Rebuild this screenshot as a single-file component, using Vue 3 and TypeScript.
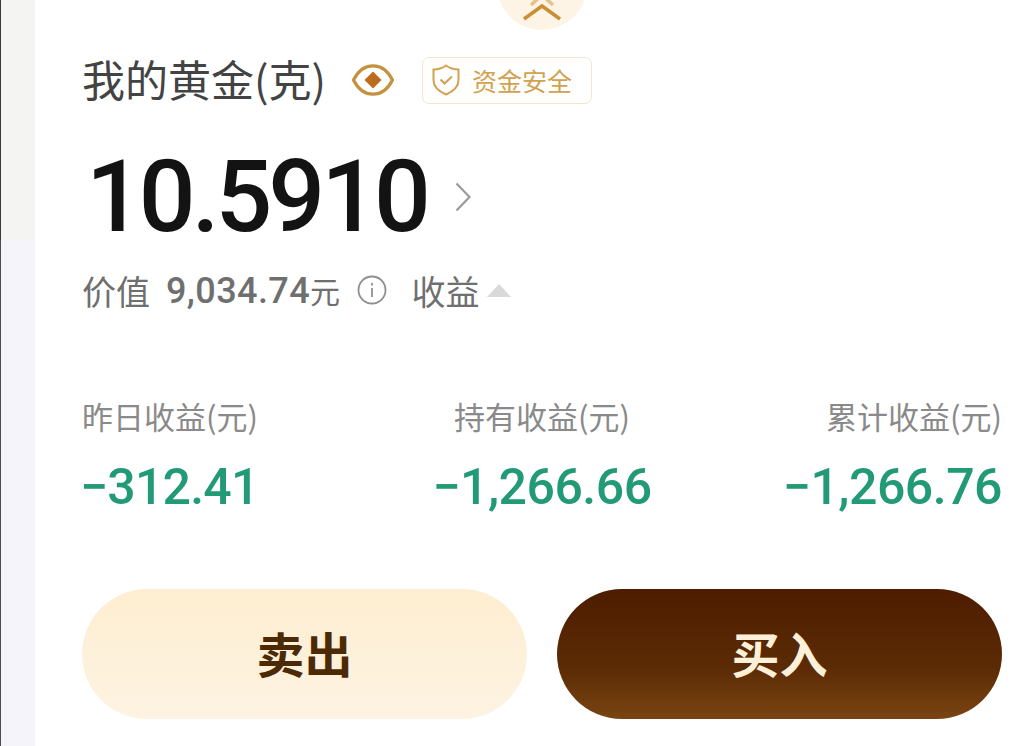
<script setup lang="ts">
interface Stat {
  label: string
  value: string
}

const stats: Stat[] = [
  { label: '昨日收益(元)', value: '−312.41' },
  { label: '持有收益(元)', value: '−1,266.66' },
  { label: '累计收益(元)', value: '−1,266.76' }
]
</script>

<template>
  <div class="page">
    <!-- Neighbouring card edge -->
    <div class="side">
      <div class="side-top"></div>
      <div class="side-bottom"></div>
    </div>

    <main class="panel">
      <div class="handle-row">
        <div class="handle">
          <svg class="handle-icon" viewBox="0 0 40 24" fill="none" stroke="#c98f35" stroke-width="3.500">
            <polyline points="9,7 20,-3 31,7" opacity="0.5" />
            <polyline points="2,21 20,8 38,21" />
          </svg>
        </div>
      </div>

      <!-- Header -->
      <div class="title-row">
        <h1 class="title">我的黄金(克)</h1>
        <svg class="eye" viewBox="0 0 42 32" fill="none">
          <path d="M1.500 16 C6 7 13 1.800 21 1.800 C29 1.800 36 7 40.500 16 C36 25 29 30.200 21 30.200 C13 30.200 6 25 1.500 16 Z" stroke="#c4913f" stroke-width="3.200" />
          <path d="M21 7.500 L29.500 16 L21 24.500 L12.500 16 Z" fill="#bd6c1c" />
        </svg>
        <div class="safe-tag">
          <svg class="shield" viewBox="0 0 28 32" fill="none" stroke="#d2a24f" stroke-width="2">
            <path d="M14 1.500 C18 4.500 22 5.500 26.500 5.500 V16 C26.500 23 21 27.500 14 30.500 C7 27.500 1.500 23 1.500 16 V5.500 C6 5.500 10 4.500 14 1.500 Z" />
            <polyline points="8.500,15.500 12.500,19.500 20,12.500" />
          </svg>
          <span>资金安全</span>
        </div>
      </div>

      <!-- Amount -->
      <div class="amount-row">
        <span class="amount">10.5910</span>
        <svg class="chevron" viewBox="0 0 16 30" fill="none" stroke="#9a9a9a" stroke-width="2.200">
          <polyline points="1.500,1.500 14.500,15 1.500,28.500" />
        </svg>
      </div>

      <div class="value-row">
        <span class="value-label">价值</span>
        <span class="value-num">9,034.74<span class="unit">元</span></span>
        <svg class="info" viewBox="0 0 30 30" fill="none" stroke="#8f8f8f" stroke-width="1.800">
          <circle cx="15" cy="15" r="13.500" />
          <line x1="15" y1="13" x2="15" y2="22" />
          <line x1="15" y1="8" x2="15" y2="10.500" />
        </svg>
        <span class="profit">收益</span>
        <span class="triangle"></span>
      </div>

      <!-- Stats -->
      <div class="stats">
        <div v-for="(stat, index) in stats" :key="index" class="stat">
          <div class="stat-label">{{ stat.label }}</div>
          <div class="stat-value">{{ stat.value }}</div>
        </div>
      </div>

      <!-- Actions -->
      <div class="actions">
        <button class="btn btn-sell">卖出</button>
        <button class="btn btn-buy">买入</button>
      </div>
    </main>
  </div>
</template>

<style>
html,
body {
  margin: 0;
  background: #fff;
}
</style>

<style scoped>
.page {
  display: flex;
  width: 1020px;
  height: 746px;
  overflow: hidden;
  background: #fff;
  font-family: "Noto Sans CJK SC", "Noto Sans", sans-serif;
}

.side {
  display: flex;
  flex-direction: column;
  width: 35px;
  flex-shrink: 0;
}

.side-top {
  height: 240px;
  box-sizing: border-box;
  border-left: 1px solid #3a3a3a;
  background: #f4f4f3;
}

.side-bottom {
  flex: 1;
  box-sizing: border-box;
  border-left: 1px solid #4a4a55;
  background: #f5f4fb;
}

.panel {
  flex: 1;
  display: flex;
  flex-direction: column;
  padding: 0 18px 0 47px;
  min-width: 0;
}

.handle-row {
  display: flex;
  justify-content: center;
  align-items: flex-end;
  height: 30px;
  overflow: hidden;
}

.handle {
  display: flex;
  align-items: flex-end;
  justify-content: center;
  flex-shrink: 0;
  width: 90px;
  height: 90px;
  border-radius: 50%;
  background: #fdf4e5;
}

.handle-icon {
  width: 40px;
  height: 24px;
  margin-bottom: 8px;
  overflow: visible;
}

.title-row {
  display: flex;
  align-items: center;
  height: 52px;
  margin-top: 24px;
}

.title {
  margin: 0 0 5px;
  font-size: 43px;
  font-weight: 400;
  line-height: 52px;
  color: #434343;
  white-space: nowrap;
}

.eye {
  width: 42px;
  height: 32px;
  margin-left: 26px;
}

.safe-tag {
  display: flex;
  align-items: center;
  gap: 12px;
  height: 47px;
  margin-left: 28px;
  padding: 0 19px 0 9px;
  border: 1px solid #f4e6c8;
  border-radius: 7px;
  box-sizing: border-box;
  font-size: 25px;
  color: #d2a24f;
  white-space: nowrap;
}

.shield {
  width: 28px;
  height: 32px;
}

.amount-row {
  display: flex;
  align-items: center;
  height: 90px;
  margin-top: 46px;
}

.amount {
  font-family: Roboto, sans-serif;
  font-size: 100px;
  font-weight: 500;
  line-height: 90px;
  letter-spacing: -4px;
  color: #131313;
  margin-left: 4px;
}

.chevron {
  width: 16px;
  height: 30px;
  margin-left: 28px;
}

.value-row {
  display: flex;
  align-items: center;
  height: 44px;
  margin-top: 26px;
  font-size: 34px;
  color: #6f6f6f;
}

.value-num {
  margin-left: 16px;
  font-family: Roboto, sans-serif;
  font-size: 36px;
  font-weight: 500;
  letter-spacing: 0.4px;
}

.unit {
  font-family: "Noto Sans CJK SC", sans-serif;
  font-size: 30px;
  font-weight: 400;
}

.info {
  width: 30px;
  height: 30px;
  margin-left: 17px;
}

.profit {
  margin-left: 24px;
}

.triangle {
  width: 0;
  height: 0;
  margin-left: 8px;
  border-left: 12px solid transparent;
  border-right: 12px solid transparent;
  border-bottom: 13px solid #d9d9d9;
}

.stats {
  display: grid;
  grid-template-columns: repeat(3, 1fr);
  margin-top: 82px;
}

.stat {
  display: flex;
  flex-direction: column;
}

.stat:nth-child(2) {
  align-items: center;
}

.stat:nth-child(3) {
  align-items: flex-end;
}

.stat-label {
  height: 44px;
  font-size: 31px;
  line-height: 44px;
  color: #8a8a8a;
  white-space: nowrap;
}

.stat-value {
  margin-top: 21px;
  font-family: Roboto, sans-serif;
  font-size: 50px;
  font-weight: 500;
  line-height: 56px;
  letter-spacing: -0.5px;
  color: #239a77;
  white-space: nowrap;
}

.stat:first-child .stat-value {
  margin-left: -2px;
  letter-spacing: -0.8px;
}

.actions {
  display: grid;
  grid-template-columns: 1fr 1fr;
  gap: 30px;
  margin-top: 74px;
}

.btn {
  height: 130px;
  border: none;
  border-radius: 65px;
  font-family: "Noto Sans CJK SC", sans-serif;
  font-size: 48px;
  font-weight: 700;
  padding: 0 0 4px;
}

.btn-sell {
  background: linear-gradient(180deg, #feeed1 0%, #fdf3e2 100%);
  color: #4d2a06;
}

.btn-buy {
  background: linear-gradient(180deg, #4e1c00 0%, #5b2b05 60%, #7a4412 100%);
  color: #fdf0d8;
}
</style>
